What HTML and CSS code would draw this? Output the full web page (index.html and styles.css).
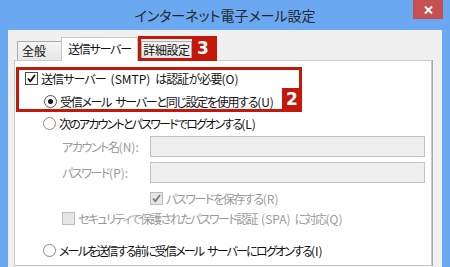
FILE: index.html
```html
<!DOCTYPE html>
<html lang="ja">
<head>
    <meta charset="UTF-8">
    <title>インターネット電子メール設定</title>
    <link rel="stylesheet" href="styles.css">
</head>
<body>
    <div class="window">
        <div class="title-bar">
            <span class="title">インターネット電子メール設定</span>
            <span class="close-btn">
                <svg width="9" height="8" viewBox="0 0 9 8"><path d="M1 0.5 L8 7.5 M8 0.5 L1 7.5" stroke="#fff" stroke-width="2"/></svg>
            </span>
        </div>
        <div class="client">
            <div class="tabs">
                <div class="tab tab-general">全般</div>
                <div class="tab tab-active">送信サーバー</div>
                <div class="callout callout-tab">
                    <div class="tab tab-detail">詳細設定</div>
                    <span class="badge">3</span>
                </div>
            </div>
            <div class="panel">
                <div class="callout callout-auth">
                    <div class="row row-auth">
                        <span class="check"><svg width="11" height="11" viewBox="0 0 11 11"><path d="M2 5.5 L4.3 8.2 L9 2" fill="none" stroke="#111" stroke-width="1.8"/></svg></span>
                        <span>送信サーバー <span class="key">(SMTP)</span> は認証が必要<span class="key">(O)</span></span>
                    </div>
                    <div class="row row-same">
                        <span class="radio on"><span class="dot"></span></span>
                        <span>受信メール サーバーと同じ設定を使用する<span class="key">(U)</span></span>
                    </div>
                    <span class="badge badge-corner">2</span>
                </div>
                <div class="row row-logon">
                    <span class="radio"></span>
                    <span>次のアカウントとパスワードでログオンする<span class="key">(L)</span></span>
                </div>
                <div class="row field-row field-account">
                    <span class="field-label">アカウント名<span class="key">(N):</span></span>
                    <span class="field-input"></span>
                </div>
                <div class="row field-row field-password">
                    <span class="field-label">パスワード<span class="key">(P):</span></span>
                    <span class="field-input"></span>
                </div>
                <div class="row row-save disabled">
                    <span class="check off"><svg width="11" height="11" viewBox="0 0 11 11"><path d="M2 5.5 L4.3 8.2 L9 2" fill="none" stroke="#7a7a7a" stroke-width="1.8"/></svg></span>
                    <span>パスワードを保存する<span class="key">(R)</span></span>
                </div>
                <div class="row row-spa disabled">
                    <span class="check off"></span>
                    <span>セキュリティで保護されたパスワード認証 <span class="key">(SPA)</span> に対応<span class="key">(Q)</span></span>
                </div>
                <div class="row row-pop">
                    <span class="radio"></span>
                    <span>メールを送信する前に受信メール サーバーにログオンする<span class="key">(I)</span></span>
                </div>
            </div>
        </div>
    </div>
</body>
</html>
```

FILE: styles.css
```css
:root {
    --title-blue: #6aa9f1; --client-bg: #f0f0f0; --close-red: #c75050;
    --mark-red: #c4180b; --text: #111111; --muted: #9a9a9a;
    --tab-border: #adadad; --panel-border: #cacaca;
}
body { margin: 0; background: var(--title-blue); font-family: "Noto Sans CJK JP", "Noto Sans", sans-serif; font-feature-settings: "palt"; font-size: 12px; color: var(--text); overflow: hidden; }
.window { width: 450px; height: 267px; display: flex; flex-direction: column; }
.title-bar { height: 30px; display: grid; grid-template-columns: 37px 1fr 37px; align-items: start; }
.title { grid-column: 2; text-align: center; font-size: 14px; line-height: 31px; color: #262626; }
.close-btn { width: 30px; height: 19px; background: var(--close-red); display: flex; align-items: center; justify-content: center; }
.client { flex: 1; margin: 0 8px; background: var(--client-bg); padding: 7px 10px 0 6px; }
.tabs { height: 23px; display: flex; align-items: flex-end; padding-left: 3px; }
.tab { box-sizing: border-box; border: 1px solid var(--tab-border); border-bottom: none; background: linear-gradient(#f4f4f4, #e7e7e7); line-height: 17px; }
.tab-general { width: 44px; height: 19px; padding-left: 4px; border-right: none; }
.tab-active { width: 77px; height: 24px; margin-bottom: -1px; background: #fff; border-color: #c6c6c6; text-align: center; line-height: 22px; letter-spacing: -1.2px; position: relative; z-index: 1; }
.callout { box-sizing: border-box; border: 3px solid var(--mark-red); }
.callout-tab { height: 25px; margin-bottom: -1px; display: flex; position: relative; z-index: 2; }
.tab-detail { width: 51px; margin-top: 2px; text-align: center; line-height: 16px; letter-spacing: -0.4px; }
.badge { background: var(--mark-red); color: #fff; font-family: "DejaVu Sans", sans-serif; font-weight: bold; font-size: 17px; width: 22px; text-align: center; line-height: 19px; letter-spacing: 0; }
.panel { box-sizing: border-box; height: 206px; background: #fff; border: 1px solid var(--panel-border); box-shadow: 1px 0 0 #a9a9a9; }
.callout-auth { width: 286px; height: 45px; margin: 6px 0 0 1px; padding-left: 6px; position: relative; }
.badge-corner { position: absolute; right: -3px; bottom: -3px; width: 20px; height: 24px; line-height: 22px; }
.row { display: flex; align-items: center; white-space: nowrap; word-spacing: 3px; }
.key { letter-spacing: 0; }
.row-auth { height: 17px; gap: 3px; letter-spacing: -0.9px; }
.row-same { height: 18px; margin-top: 5px; padding-left: 19px; gap: 3px; letter-spacing: -1.3px; }
.row-logon { height: 18px; margin-top: 2px; padding-left: 28px; gap: 3px; letter-spacing: -1.8px; }
.field-row { height: 21px; padding-left: 47px; }
.field-account { margin-top: 4px; }
.field-password { margin-top: 5px; }
.field-label { width: 88px; color: var(--muted); letter-spacing: -1.4px; }
.field-input { box-sizing: border-box; width: 275px; height: 21px; background: #efefef; border: 1px solid #b9c3d0; }
.row-save { height: 18px; margin-top: 6px; padding-left: 135px; gap: 3px; letter-spacing: -1.4px; }
.row-spa { height: 17px; margin-top: 3px; padding-left: 47px; gap: 3px; letter-spacing: -1.6px; }
.row-pop { height: 18px; margin-top: 14px; padding-left: 28px; gap: 3px; letter-spacing: -1.8px; }
.disabled { color: var(--muted); }
.check { box-sizing: border-box; width: 13px; height: 13px; border: 1px solid #4a4a4a; background: #fff; display: flex; align-items: center; justify-content: center; flex: none; }
.check.off { border-color: #bdbdbd; background: #e6e6e6; }
.radio { box-sizing: border-box; width: 13px; height: 13px; border: 1px solid #8a8a8a; border-radius: 50%; background: #fff; display: flex; align-items: center; justify-content: center; flex: none; }
.radio.on { border-color: #555; }
.dot { width: 5px; height: 5px; border-radius: 50%; background: #111; }
```
